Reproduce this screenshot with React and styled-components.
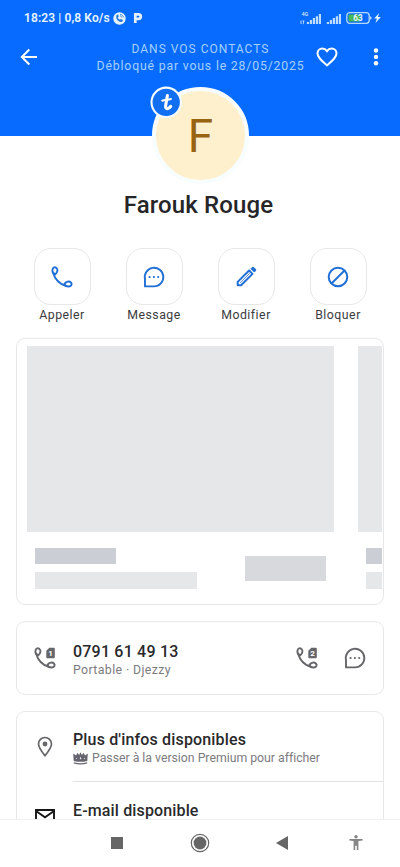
import React from "react";
import styled, { createGlobalStyle } from "styled-components";

const GlobalStyle = createGlobalStyle`
  * { box-sizing: border-box; }
  body { margin: 0; background: #fff; font-family: Roboto, sans-serif; overflow: hidden; }
  svg { display: block; flex: none; }
`;

const Screen = styled.div`
  width: 400px;
  height: 867px;
  display: flex;
  flex-direction: column;
  overflow: hidden;
  background: #fff;
`;

const Header = styled.header`
  flex: none;
  height: 135.5px;
  background: #086bff;
  color: #fff;
`;

const StatusBar = styled.div`
  height: 36px;
  padding: 0 18px 0 24px;
  display: flex;
  align-items: center;
  justify-content: space-between;
`;

const Clock = styled.span`
  font-size: 12px;
  line-height: 16px;
  font-weight: 600;
  color: #e6f4ff;
  white-space: nowrap;
  width: 89px;
  letter-spacing: 0.1px;
`;

const StatusGroup = styled.div`
  display: flex;
  align-items: center;
  gap: ${(p) => p.$gap}px;
`;

const Toolbar = styled.div`
  height: 42px;
  display: grid;
  grid-template-columns: 57px 250px 40px 58px;
  align-items: center;
`;

const IconButton = styled.button`
  border: 0;
  padding: 0;
  background: none;
  color: inherit;
  display: flex;
  justify-content: center;
`;

const Caption = styled.div`
  text-align: center;
  color: #a3d0ff;
  white-space: nowrap;
  margin: 1px 0 0 37px;
`;

const CaptionLine = styled.div`
  font-size: ${(p) => p.$size}px;
  letter-spacing: ${(p) => p.$spacing}px;
  line-height: 16.5px;
`;

const Profile = styled.section`
  flex: none;
  height: 112.5px;
  display: flex;
  flex-direction: column;
  align-items: center;
`;

const Avatar = styled.div`
  position: relative;
  width: 97px;
  height: 97px;
  margin: -48.5px 0 0 1px;
  border: 4px solid #f8fdff;
  border-radius: 50%;
  background: #fff0cd;
  color: #986411;
  font-size: 46px;
  line-height: 90px;
  text-align: center;
  flex: none;
`;

const Badge = styled.div`
  position: absolute;
  left: -6px;
  top: -5px;
  width: 32px;
  height: 32px;
`;

const Name = styled.h1`
  margin: 7px 0 0;
  padding-right: 3px;
  font-size: 24px;
  line-height: 28px;
  font-weight: 500;
  letter-spacing: 0.14px;
  color: #262628;
`;

const Actions = styled.nav`
  flex: none;
  display: grid;
  grid-template-columns: repeat(4, 92px);
  justify-content: center;
  height: 90px;
`;

const Action = styled.div`
  display: flex;
  flex-direction: column;
  align-items: center;
`;

const ActionTile = styled.div`
  width: 57px;
  height: 57px;
  border: 1px solid #e7e7e9;
  border-radius: 17px;
  display: grid;
  place-items: center;
  color: #206fd6;
`;

const ActionLabel = styled.span`
  margin-top: 1.5px;
  font-size: 12.3px;
  line-height: 16px;
  letter-spacing: 0.5px;
  color: #3b3b3d;
`;

const Card = styled.section`
  flex: none;
  width: 368px;
  margin: 0 16px ${(p) => p.$gap || 0}px;
  border: 1px solid #e7e7e9;
  border-radius: 9px;
  height: ${(p) => p.$height}px;
`;

const Carousel = styled.div`
  display: flex;
  gap: 24px;
  padding: 7px 0 0 9.5px;
  margin-right: 1px;
  overflow: hidden;
`;

const Slide = styled.div`
  flex: none;
  width: 307.5px;
`;

const Block = styled.div`
  width: ${(p) => p.$w};
  height: ${(p) => p.$h}px;
  background: ${(p) => p.$color || "#e6e7e8"};
`;

const SlideFooter = styled.div`
  display: flex;
  align-items: center;
  justify-content: space-between;
  padding: 16px 8px 0;
`;

const Lines = styled.div`
  display: flex;
  flex-direction: column;
  gap: 8px;
`;

const Row = styled.div`
  height: ${(p) => p.$height}px;
  display: flex;
  align-items: ${(p) => p.$align || "center"};
  padding-left: 16px;
  color: #65666a;
`;

const Lead = styled.div`
  width: 40px;
  flex: none;
  padding-top: ${(p) => p.$top || 0}px;
`;

const RowBody = styled.div`
  flex: 1;
  align-self: stretch;
  padding-top: ${(p) => p.$top}px;
  border-bottom: ${(p) => (p.$divider ? "1px solid #e2e2e4" : "0")};
  white-space: nowrap;
`;

const RowTitle = styled.div`
  font-size: 16px;
  line-height: 20px;
  font-weight: 500;
  letter-spacing: ${(p) => p.$spacing || 0}px;
  color: #29292b;
`;

const RowSub = styled.div`
  display: flex;
  align-items: center;
  gap: 4px;
  font-size: 12.3px;
  line-height: 16px;
  letter-spacing: ${(p) => p.$spacing || 0}px;
  color: #7b7b7e;
`;

const RowActions = styled.div`
  display: flex;
  gap: 24px;
  padding-right: 16px;
`;

const InfoList = styled.section`
  flex: 1;
  min-height: 0;
  overflow: hidden;
  width: 368px;
  margin: 0 16px;
  border: 1px solid #e7e7e9;
  border-bottom: 0;
  border-radius: 9px 9px 0 0;
`;

const SystemNav = styled.footer`
  flex: none;
  height: 48px;
  border-top: 1px solid #f1f1f2;
  background: #fff;
  display: grid;
  grid-template-columns: 82px 84px 80px 68px;
  align-items: center;
  justify-items: center;
  color: #666;
  padding: 0 10px 1px 76px;
`;

const Handset = () => (
  <g stroke="currentColor" strokeWidth="1.9" fill="none" strokeLinejoin="round">
    <path d="M2.4 5.2C2.5 2.4 4.7 1.5 6.4 2.9 8.2 4.5 7.7 7.2 5.3 9.3 3.5 8.8 2.3 7.3 2.4 5.2Z" />
    <path d="M14.4 18.9C16.4 16.3 19.2 15.9 20.9 17.5 22.5 19.1 21.4 21.3 18.6 21.5 16.6 21.6 15.1 20.7 14.4 18.9Z" />
    <path d="M3.1 7.8C4.8 13.9 9.7 19.1 16.2 21.2" />
  </g>
);

const PhoneIcon = () => (
  <svg width="24" height="24" viewBox="0 0 24 24" fill="none">
    <Handset />
  </svg>
);

const SimPhoneIcon = ({ sim }) => (
  <svg width="24" height="24" viewBox="0 0 24 24" fill="none">
    <Handset />
    <path d="M16.3 1.7h4.5q1 0 1 1v8.5q0 1-1 1h-6.5q-1 0-1-1V4.8Z" fill="currentColor" />
    <text x="17.6" y="10" fontFamily="Roboto, sans-serif" fontSize="8" fontWeight="700" textAnchor="middle" fill="#fff">
      {sim}
    </text>
  </svg>
);

const ChatIcon = () => (
  <svg width="24" height="24" viewBox="0 0 24 24" fill="none">
    <path d="M3 21.4V14.3A9.3 9.3 0 1 1 12 21.4Z" stroke="currentColor" strokeWidth="1.9" strokeLinejoin="round" />
    <g fill="currentColor">
      <circle cx="7.6" cy="12" r="1.1" />
      <circle cx="11.9" cy="12" r="1.1" />
      <circle cx="16.2" cy="12" r="1.1" />
    </g>
  </svg>
);

const PencilIcon = () => (
  <svg width="24" height="24" viewBox="0 0 24 24" fill="none">
    <path d="M3.7 20.3v-3.4L15.1 5.5l3.4 3.4L7.1 20.3Z" stroke="currentColor" strokeWidth="2" strokeLinejoin="round" />
    <path d="m6.1 17.9 9.6-9.6" stroke="currentColor" strokeWidth=".7" />
    <path d="m17 3.7 1.1-1.1q.9-.8 1.8 0l1.5 1.5q.8.9 0 1.8L20.3 7Z" fill="currentColor" stroke="currentColor" />
  </svg>
);

const BlockIcon = () => (
  <svg width="24" height="24" viewBox="0 0 24 24" fill="none" stroke="currentColor" strokeWidth="2">
    <circle cx="12" cy="12" r="9.3" />
    <path d="M5.5 18.5 18.5 5.5" />
  </svg>
);

const BackIcon = () => (
  <svg width="18" height="18" viewBox="0 0 18 18" fill="none" stroke="currentColor" strokeWidth="2">
    <path d="M17 9H2M9.3 1.5 1.8 9l7.5 7.5" />
  </svg>
);

const HeartIcon = () => (
  <svg width="22" height="20" viewBox="0 0 22 20" fill="none" stroke="currentColor" strokeWidth="2">
    <path d="M11 18.3C5.2 13.2 1.5 10.2 1.5 6.4 1.5 3.5 3.6 1.6 6.3 1.6c1.9 0 3.6 1 4.7 2.5 1.1-1.5 2.8-2.5 4.7-2.5 2.7 0 4.8 1.9 4.8 4.8 0 3.8-3.7 6.8-9.5 11.9Z" />
  </svg>
);

const MoreIcon = () => (
  <svg width="6" height="18" viewBox="0 0 6 18" fill="currentColor">
    <circle cx="3" cy="2.5" r="2.2" />
    <circle cx="3" cy="8.9" r="2.2" />
    <circle cx="3" cy="15.3" r="2.2" />
  </svg>
);

const CallerIcon = () => (
  <svg width="13" height="13" viewBox="0 0 13 13">
    <circle cx="6.5" cy="6.5" r="6.2" fill="#e4f2ff" />
    <path d="M3.6 3.1C2.1 6.8 5.5 10.8 9.3 9.8l.6-1.8-2-1.1-1 .9C5.8 7.3 5.2 6.3 4.8 5.3l1-.8-.7-1.9Z" fill="#2875d9" />
    <path d="M7 2.4c1.8 0 3.2 1.2 3.5 3M7 4c1 0 1.6.6 1.8 1.5" fill="none" stroke="#2875d9" strokeWidth=".8" />
  </svg>
);

const ParkingIcon = () => (
  <svg width="10" height="12" viewBox="0 0 10 12" fill="none">
    <path d="M2.3 11V2.3h3.2a2.2 2.2 0 0 1 0 4.6H3" stroke="#e4f2ff" strokeWidth="2.7" />
  </svg>
);

const SignalIcon = ({ network }) => (
  <svg width={network ? 22 : 16} height="14" viewBox={network ? "0 0 22 14" : "6 0 16 14"} fill="#bddcff">
    <path d="M6.8 10.9h2.2V13H6.8ZM9.8 9h2.2v4H9.8ZM12.8 7.1H15V13h-2.2ZM15.8 5.2H18V13h-2.2ZM18.8 3H21v10h-2.2Z" />
    {network && (
      <>
        <text x="1.4" y="5" fontFamily="Roboto, sans-serif" fontSize="5.5" fontWeight="700">4G</text>
        <path d="M.5 9.5h1V13h-1ZM2.5 9.5h2l-1 3.7-.8-.2.6-2.6h-.8Z" />
      </>
    )}
  </svg>
);

const BatteryIcon = () => (
  <svg width="36" height="14" viewBox="0 0 36 14">
    <rect x=".8" y="1.7" width="22.4" height="10.6" rx="3" fill="none" stroke="#b8d9fb" strokeWidth="1.3" />
    <rect x="2.5" y="3.4" width="12" height="7.2" rx="1" fill="#47b757" />
    <path d="M24 5.2q1.6 0 1.6 1.8T24 8.8Z" fill="#b8d9fb" />
    <text x="12" y="9.9" fontFamily="Roboto, sans-serif" fontSize="8.2" fontWeight="700" textAnchor="middle" fill="#e8f6ff">63</text>
    <path d="m33.2 2-5 5.6h2.7L29.5 12l5.3-6h-2.9Z" fill="#e8f6ff" />
  </svg>
);

const LogoIcon = () => (
  <svg width="32" height="32" viewBox="0 0 32 32" fill="none">
    <circle cx="16.2" cy="16.3" r="14.7" fill="#126ff1" stroke="#f5fbff" strokeWidth="2.1" />
    <path d="M17.4 9.5 15.8 18.7c-.6 3.1.2 4 1.7 3.9 1.5-.1 2.5-1 3.2-2.2" stroke="#fff" strokeWidth="3.1" strokeLinecap="round" />
    <path d="M12.2 14.7c2.3-.9 4.9-.8 8.7-1.7" stroke="#fff" strokeWidth="2" strokeLinecap="round" />
  </svg>
);

const PinIcon = () => (
  <svg width="24" height="24" viewBox="0 0 24 24" fill="none">
    <path d="M12 20.7C9 17 5.5 12.7 5.5 9a6.5 6.5 0 0 1 13 0c0 3.7-3.5 8-6.5 11.7Z" stroke="currentColor" strokeWidth="1.7" />
    <circle cx="12" cy="9" r="2.4" fill="currentColor" />
  </svg>
);

const CrownIcon = () => (
  <svg width="15" height="13" viewBox="0 0 15 13" fill="#65656f">
    <path d="M.2 1.4 3 3.4 4.4.8l1.7 2.3L7.5.3l1.4 2.8L10.6.8 12 3.4l2.8-2-.5 7.5q-6.8 1.9-13.6 0Z" />
    <path d="M.8 10.2q6.7 1.9 13.4 0v1.3q-6.7 2-13.4 0Z" />
    <path d="m7.5 5 .8 1.3-.8 1.2-.8-1.2ZM3.4 5.8l.5.7-.5.7-.5-.7ZM11.6 5.8l.5.7-.5.7-.5-.7Z" fill="#fff" />
  </svg>
);

const MailIcon = () => (
  <svg width="24" height="24" viewBox="0 0 24 24" fill="none" stroke="#161616" strokeWidth="1.9">
    <path d="M3 4h18v16H3ZM3 5l9 6.3L21 5" />
  </svg>
);

const RecentsIcon = () => (
  <svg width="12" height="12" viewBox="0 0 12 12" fill="currentColor"><path d="M0 0h12v12H0Z" /></svg>
);

const HomeIcon = () => (
  <svg width="20" height="20" viewBox="0 0 20 20">
    <circle cx="10" cy="10" r="8.7" fill="none" stroke="currentColor" strokeWidth="1.2" />
    <circle cx="10" cy="10" r="6.4" fill="currentColor" />
  </svg>
);

const NavBackIcon = () => (
  <svg width="12" height="14" viewBox="0 0 12 14" fill="currentColor"><path d="M12 0v14L0 7Z" /></svg>
);

const AccessibilityIcon = () => (
  <svg width="14" height="16" viewBox="0 0 14 16" fill="#858585">
    <circle cx="7" cy="1.8" r="1.7" />
    <path d="M.3 4h13.4v1.5L9.4 6v9H7.8v-4.2H6.2V15H4.6V6L.3 5.5Z" />
  </svg>
);

const actions = [
  { label: "Appeler", Icon: PhoneIcon },
  { label: "Message", Icon: ChatIcon },
  { label: "Modifier", Icon: PencilIcon },
  { label: "Bloquer", Icon: BlockIcon },
];

const PlaceholderSlide = () => (
  <Slide>
    <Block $w="100%" $h={185.5} />
    <SlideFooter>
      <Lines>
        <Block $w="81px" $h={16.5} $color="#cbced4" />
        <Block $w="162px" $h={16.5} />
      </Lines>
      <Block $w="81px" $h={25} $color="#d8d9dd" />
    </SlideFooter>
  </Slide>
);

export default function App() {
  return (
    <Screen>
      <GlobalStyle />
      <Header>
        <StatusBar>
          <StatusGroup $gap={0}>
            <Clock>18:23 | 0,8 Ko/s</Clock>
            <StatusGroup $gap={7}>
              <CallerIcon />
              <ParkingIcon />
            </StatusGroup>
          </StatusGroup>
          <StatusGroup $gap={4}>
            <SignalIcon network />
            <SignalIcon />
            <BatteryIcon />
          </StatusGroup>
        </StatusBar>
        <Toolbar>
          <IconButton aria-label="Retour"><BackIcon /></IconButton>
          <Caption>
            <CaptionLine $size={12} $spacing={1}>DANS VOS CONTACTS</CaptionLine>
            <CaptionLine $size={12.3} $spacing={0.81}>Débloqué par vous le 28/05/2025</CaptionLine>
          </Caption>
          <IconButton aria-label="Favori"><HeartIcon /></IconButton>
          <IconButton aria-label="Plus"><MoreIcon /></IconButton>
        </Toolbar>
      </Header>

      <Profile>
        <Avatar>
          F
          <Badge><LogoIcon /></Badge>
        </Avatar>
        <Name>Farouk Rouge</Name>
      </Profile>

      <Actions>
        {actions.map(({ label, Icon }) => (
          <Action key={label}>
            <ActionTile><Icon /></ActionTile>
            <ActionLabel>{label}</ActionLabel>
          </Action>
        ))}
      </Actions>

      <Card $height={267} $gap={16}>
        <Carousel>
          <PlaceholderSlide />
          <PlaceholderSlide />
        </Carousel>
      </Card>

      <Card $height={73.5} $gap={16.5}>
        <Row $height={72}>
          <Lead><SimPhoneIcon sim="1" /></Lead>
          <RowBody $top={19.5}>
            <RowTitle $spacing={0.2}>0791 61 49 13</RowTitle>
            <RowSub $spacing={0.4}>Portable · Djezzy</RowSub>
          </RowBody>
          <RowActions>
            <SimPhoneIcon sim="2" />
            <ChatIcon />
          </RowActions>
        </Row>
      </Card>

      <InfoList>
        <Row $height={70}>
          <Lead><PinIcon /></Lead>
          <RowBody $top={18} $divider>
            <RowTitle $spacing={0.16}>Plus d'infos disponibles</RowTitle>
            <RowSub $spacing={-0.02}>
              <CrownIcon />
              Passer à la version Premium pour afficher
            </RowSub>
          </RowBody>
        </Row>
        <Row $height={70} $align="flex-start">
          <Lead $top={24}><MailIcon /></Lead>
          <RowBody $top={19}>
            <RowTitle $spacing={0.14}>E-mail disponible</RowTitle>
          </RowBody>
        </Row>
      </InfoList>

      <SystemNav>
        <RecentsIcon />
        <HomeIcon />
        <NavBackIcon />
        <AccessibilityIcon />
      </SystemNav>
    </Screen>
  );
}
